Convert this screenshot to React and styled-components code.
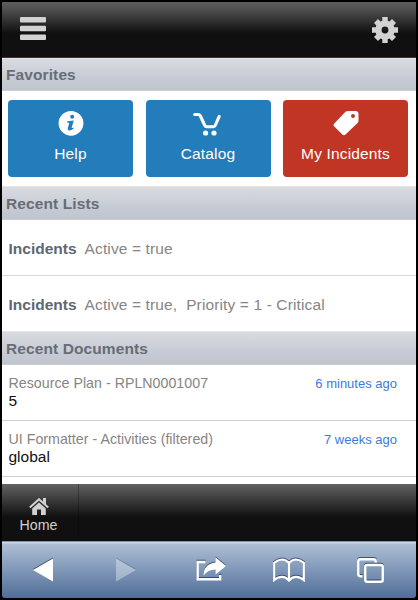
import React from "react";
import styled, { createGlobalStyle } from "styled-components";

const GlobalStyle = createGlobalStyle`
  *, *::before, *::after { box-sizing: border-box; }
  body { margin: 0; background: #000; font-family: "Liberation Sans", Arial, sans-serif; }
  svg { display: block; flex: none; }
`;

const Screen = styled.main`
  width: 418px;
  height: 600px;
  display: flex;
  flex-direction: column;
  padding: 2px;
  background: #000;
  overflow: hidden;
`;

const TopBar = styled.header`
  height: 56px;
  flex: none;
  display: flex;
  align-items: center;
  justify-content: space-between;
  padding: 0 18px;
  border-bottom: 1px solid #393332;
  background: linear-gradient(#5d5d5d 0, #535353 6px, #101010 31px, #101010 100%);
`;

const Content = styled.div`
  height: 426px;
  flex: none;
  display: flex;
  flex-direction: column;
  background: #fff;
`;

const SectionTitle = styled.h2`
  margin: 0;
  height: ${(p) => p.$height}px;
  flex: none;
  padding: 1px 4px 0;
  display: flex;
  align-items: center;
  color: #686d75;
  font-size: 15.5px;
  font-weight: 700;
  line-height: 20px;
  letter-spacing: 0.1px;
  border-top: 1px solid #e3e5e7;
  border-bottom: 1px solid #cbced1;
  background: linear-gradient(#d8dbdf, #c6cad4 65%, #bfc5cd);
`;

const Tiles = styled.nav`
  display: grid;
  grid-template-columns: repeat(3, 125px);
  column-gap: 12.5px;
  height: 95px;
  flex: none;
  padding: 9px 6px;
`;

const Tile = styled.a`
  display: flex;
  flex-direction: column;
  align-items: center;
  height: 77px;
  padding-top: 10px;
  gap: 8px;
  border-radius: 4px;
  background: ${(p) => p.$color};
  color: #fff;
  font-size: 15.5px;
  line-height: 20px;
  letter-spacing: 0.15px;
`;

const ListRow = styled.div`
  display: flex;
  align-items: center;
  gap: 8px;
  height: ${(p) => p.$height}px;
  flex: none;
  padding: 2px 7px 0 6.5px;
  border-bottom: ${(p) => (p.$last ? "0" : "1px solid #d8d8d8")};
  font-size: 15.5px;
  letter-spacing: 0.13px;
  color: #858585;
  white-space: pre;
`;

const ListName = styled.strong`
  color: #606770;
  letter-spacing: 0;
`;

const DocumentRow = styled.article`
  display: flex;
  justify-content: space-between;
  height: 56px;
  flex: none;
  padding: 10px 19px 0 6.5px;
  border-bottom: 1px solid #d2d2d2;
`;

const DocumentTitle = styled.div`
  color: #858585;
  font-size: 14.2px;
  line-height: 17px;
  letter-spacing: 0.03px;
`;

const DocumentValue = styled.div`
  color: #111;
  font-size: 15.5px;
  line-height: 17px;
`;

const Age = styled.time`
  color: #3b7bdc;
  font-size: 13px;
  line-height: 17px;
`;

const TabBar = styled.nav`
  height: 57px;
  flex: none;
  display: flex;
  background: linear-gradient(#626262, #101010 33px, #101010);
`;

const Tab = styled.a`
  width: 77px;
  height: 52px;
  display: flex;
  flex-direction: column;
  align-items: center;
  padding: 14px 3px 0 0;
  border-right: 1px solid rgba(0, 0, 0, 0.25);
  color: #d0d0d0;
  font-size: 14.2px;
  line-height: 20px;
`;

const BrowserBar = styled.footer`
  height: 57px;
  flex: none;
  display: grid;
  grid-template-columns: 82px 84px 86px 70px 92px;
  align-items: center;
  justify-items: center;
  border-top: 1px solid #8091aa;
  border-radius: 0 0 3px 3px;
  background: linear-gradient(#cbd7e5 0, #cbd7e5 1px, #adbed4 2px, #7f97b8 50%, #526e98 100%);
`;

const Control = styled.button`
  border: 0;
  padding: 0;
  background: none;
  color: #fff;
  opacity: ${(p) => (p.$disabled ? 0.35 : 1)};
  svg { filter: drop-shadow(0 -1px 0 rgba(30, 48, 77, 0.7)); }
`;

const MenuIcon = () => (
  <svg width="26" height="25" viewBox="0 0 26 25" fill="#d2d2d2">
    <rect y="0" width="26" height="5.5" rx="1" />
    <rect y="8.7" width="26" height="5.5" rx="1" />
    <rect y="17.4" width="26" height="5.5" rx="1" />
  </svg>
);

const GearIcon = () => (
  <svg width="26" height="26" viewBox="-13 -13 26 26" fill="#d2d2d2">
    <path
      fillRule="evenodd"
      d="M-2.7-13H2.7V-9.3L4.5-8.6 7-11 11-7 8.6-4.5 9.3-2.7H13V2.7H9.3L8.6 4.5 11 7 7 11 4.5 8.6 2.7 9.3V13H-2.7V9.3L-4.5 8.6-7 11-11 7-8.6 4.5-9.3 2.7H-13V-2.7H-9.3L-8.6-4.5-11-7-7-11-4.5-8.6-2.7-9.3ZM0-3.4A3.4 3.4 0 1 0 0 3.4 3.4 3.4 0 1 0 0-3.4Z"
    />
  </svg>
);

const InfoIcon = () => (
  <svg width="26" height="26" viewBox="0 0 26 26">
    <circle cx="13" cy="13.3" r="12.4" fill="#fff" />
    <circle cx="14.2" cy="6.8" r="2" fill="#237dbb" />
    <path
      d="M9.3 11.3 15.8 10.6 13.7 17.6Q13.4 18.7 15.5 17.4L15.9 18.2Q13.5 20.7 11.2 20.6 9.2 20.4 9.9 17.8L11.3 12.8 9 12.5Z"
      fill="#237dbb"
    />
  </svg>
);

const CartIcon = () => (
  <svg width="30" height="26" viewBox="0 0 30 26" fill="none" stroke="#fff">
    <path d="M1.7 4.5H5.2Q6.5 4.5 7.3 5.8L11.8 15.5Q12.4 16.7 13.7 16.7H20.5Q21.7 16.7 22.2 15.5L26.2 6.3" strokeWidth="3.1" strokeLinecap="round" />
    <circle cx="12.6" cy="23" r="2.6" fill="#fff" stroke="none" />
    <circle cx="21" cy="23" r="2.6" fill="#fff" stroke="none" />
  </svg>
);

const TagIcon = () => (
  <svg width="26" height="26" viewBox="0 0 26 26">
    <path
      fill="#fff"
      fillRule="evenodd"
      d="M13.5 1.2Q14.5 1 16 1H22.5Q25.5 1 25.5 4V10.5Q25.5 12 24.5 13L12.5 24.6Q11 26 9.3 24.5L1.3 16.5Q-.3 15 1.3 13.5L11.5 2.8Q12.5 1.6 13.5 1.2ZM20 4A2 2 0 1 0 20 8 2 2 0 1 0 20 4Z"
    />
  </svg>
);

const HomeIcon = () => (
  <svg width="20" height="17" viewBox="0 0 20 17">
    <path d="M.8 9.4 10 1.2 19.2 9.4" fill="none" stroke="#d0d0d0" strokeWidth="2" />
    <path d="M14 0H17V7L14 4.3Z" fill="#d0d0d0" />
    <path d="M10 4.5 16.8 10.5V17H12V11.5H8V17H3.2V10.5Z" fill="#d0d0d0" />
  </svg>
);

const BackIcon = () => (
  <svg width="20" height="24" viewBox="0 0 20 24"><path d="M0 12 20 .5V23.5Z" fill="currentColor" /></svg>
);

const ForwardIcon = () => (
  <svg width="20" height="24" viewBox="0 0 20 24"><path d="M20 12 0 .5V23.5Z" fill="currentColor" /></svg>
);

const ShareIcon = () => (
  <svg width="30" height="26" viewBox="0 0 30 26">
    <path d="M9.5 5H1.7V22.2H24.2V18" fill="none" stroke="#fff" strokeWidth="2.4" />
    <path d="M19.5.3 30 9 19.5 17.5V12.5Q12 12.5 7.5 18.5 7.5 7 19.5 5.5Z" fill="#fff" />
  </svg>
);

const BookIcon = () => (
  <svg width="32" height="24" viewBox="0 0 32 24" fill="none" stroke="#fff" strokeWidth="2.2">
    <path d="M16 22.5V5Q13 1.5 9 1.5 5 1.5 1.2 4.8V22Q4.5 18.8 9 18.8 13 18.8 16 22.5 19 18.8 23 18.8 27.5 18.8 30.8 22V4.8Q27 1.5 23 1.5 19 1.5 16 5" />
  </svg>
);

const PagesIcon = () => (
  <svg width="27" height="25" viewBox="0 0 27 25" fill="none" stroke="#fff" strokeWidth="2.5">
    <path d="M5.5 18.2H3.5Q1.3 18.2 1.3 16V3.5Q1.3 1.3 3.5 1.3H16.5Q18.7 1.3 18.7 3.5V4.5" />
    <rect x="8.3" y="7" width="17.4" height="16.7" rx="2" />
  </svg>
);

export default function App() {
  return (
    <>
      <GlobalStyle />
      <Screen>
        <TopBar>
          <MenuIcon />
          <GearIcon />
        </TopBar>
        <Content>
          <SectionTitle $height={33}>Favorites</SectionTitle>
          <Tiles>
            <Tile $color="#237dbb"><InfoIcon />Help</Tile>
            <Tile $color="#237dbb"><CartIcon />Catalog</Tile>
            <Tile $color="#c03524"><TagIcon />My Incidents</Tile>
          </Tiles>
          <SectionTitle $height={34}>Recent Lists</SectionTitle>
          <ListRow $height={56}><ListName>Incidents</ListName><span>Active = true</span></ListRow>
          <ListRow $height={55} $last><ListName>Incidents</ListName><span>Active = true,&nbsp; Priority = 1 - Critical</span></ListRow>
          <SectionTitle $height={34}>Recent Documents</SectionTitle>
          <DocumentRow>
            <div>
              <DocumentTitle>Resource Plan - RPLN0001007</DocumentTitle>
              <DocumentValue>5</DocumentValue>
            </div>
            <Age>6 minutes ago</Age>
          </DocumentRow>
          <DocumentRow>
            <div>
              <DocumentTitle>UI Formatter - Activities (filtered)</DocumentTitle>
              <DocumentValue>global</DocumentValue>
            </div>
            <Age>7 weeks ago</Age>
          </DocumentRow>
        </Content>
        <TabBar>
          <Tab><HomeIcon />Home</Tab>
        </TabBar>
        <BrowserBar>
          <Control aria-label="Back"><BackIcon /></Control>
          <Control aria-label="Forward" $disabled><ForwardIcon /></Control>
          <Control aria-label="Share"><ShareIcon /></Control>
          <Control aria-label="Bookmarks"><BookIcon /></Control>
          <Control aria-label="Pages"><PagesIcon /></Control>
        </BrowserBar>
      </Screen>
    </>
  );
}
